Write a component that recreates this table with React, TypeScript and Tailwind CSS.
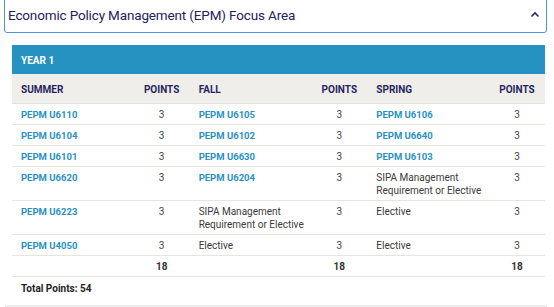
import React from "react";

type Cell = { text: string; link?: boolean };
type Row = [Cell, string, Cell, string, Cell, string];

const rows: Row[] = [
  [{ text: "PEPM U6110", link: true }, "3", { text: "PEPM U6105", link: true }, "3", { text: "PEPM U6106", link: true }, "3"],
  [{ text: "PEPM U6104", link: true }, "3", { text: "PEPM U6102", link: true }, "3", { text: "PEPM U6640", link: true }, "3"],
  [{ text: "PEPM U6101", link: true }, "3", { text: "PEPM U6630", link: true }, "3", { text: "PEPM U6103", link: true }, "3"],
  [{ text: "PEPM U6620", link: true }, "3", { text: "PEPM U6204", link: true }, "3", { text: "SIPA Management Requirement or Elective" }, "3"],
  [{ text: "PEPM U6223", link: true }, "3", { text: "SIPA Management Requirement or Elective" }, "3", { text: "Elective" }, "3"],
  [{ text: "PEPM U4050", link: true }, "3", { text: "Elective" }, "3", { text: "Elective" }, "3"],
];

function NameCell({ c }: { c: Cell }) {
  return c.link ? (
    <div className="pl-[9px] pt-[4px] pb-[3px] font-bold text-[9.5px] text-[#2a90c4]">{c.text}</div>
  ) : (
    <div className="pl-[9px] pt-[4px] pb-[3px] text-[#3a3a3a]">{c.text}</div>
  );
}

function PtsCell({ v, bold }: { v: string; bold?: boolean }) {
  return (
    <div className={"pt-[4px] pb-[3px] text-center " + (bold ? "font-bold text-[#333]" : "text-[#444]")}>{v}</div>
  );
}

const grid = "grid grid-cols-[1fr_56px_1fr_56px_1fr_56px]";

export default function App() {
  return (
    <div
      className="w-[554px] h-[307px] overflow-hidden bg-white text-[10px] leading-[13px]"
      style={{ fontFamily: "Roboto, 'Liberation Sans', sans-serif" }}
    >
      <div className="ml-[4px] w-[543px]">
        <div className="mt-[-6px] h-[39px] border border-[#4d93e3] rounded-[3px] flex items-center justify-between pl-[3px] pr-[5px] pt-[2px]">
          <span className="text-[13.5px] tracking-[-0.15px] leading-[18px] text-[#24225e]">Economic Policy Management (EPM) Focus Area</span>
          <svg width="10" height="7" viewBox="0 0 10 7" className="mr-[1px]">
            <path d="M1.5 5.5 L5 2 L8.5 5.5" fill="none" stroke="#2a2866" strokeWidth="1.6" />
          </svg>
        </div>
        <div className="ml-[8px] w-[533px] mt-[12px]">
          <div className="h-[29px] bg-[#2592c1] flex items-center pl-[9px] pt-[1px] font-bold text-white">YEAR 1</div>
          <div className={grid + " h-[30px] items-center pt-[2px] bg-[#efeeea] border-b border-[#e3e2dc] font-bold text-[#27255f]"}>
            <div className="pl-[9px]">SUMMER</div>
            <div className="text-center">POINTS</div>
            <div className="pl-[9px]">FALL</div>
            <div className="text-center">POINTS</div>
            <div className="pl-[9px]">SPRING</div>
            <div className="text-center">POINTS</div>
          </div>
          {rows.map((r, i) => (
            <div key={i} className={grid + " border-b border-[#e6e5e0]"}>
              <NameCell c={r[0]} />
              <PtsCell v={r[1]} />
              <NameCell c={r[2]} />
              <PtsCell v={r[3]} />
              <NameCell c={r[4]} />
              <PtsCell v={r[5]} />
            </div>
          ))}
          <div className={grid + " border-b border-[#e6e5e0]"}>
            <div />
            <PtsCell v="18" bold />
            <div />
            <PtsCell v="18" bold />
            <div />
            <PtsCell v="18" bold />
          </div>
          <div className="h-[28px] flex items-center pl-[9px] pb-[5px] font-bold text-[#222]">Total Points: 54</div>
        </div>
        <div className="ml-[1px] h-[2px] bg-[#ececec]" />
      </div>
    </div>
  );
}
